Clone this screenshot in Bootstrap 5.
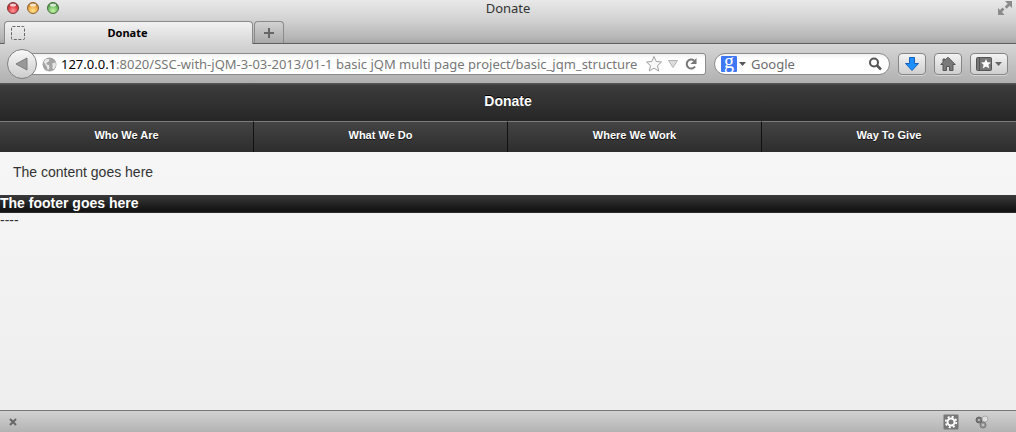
<!DOCTYPE html>
<html lang="en">
<head>
<meta charset="utf-8">
<meta name="viewport" content="width=device-width, initial-scale=1">
<title>Donate</title>
<link href="https://cdn.jsdelivr.net/npm/bootstrap@5.3.0/dist/css/bootstrap.min.css" rel="stylesheet">
<style>
body{font-family:"Liberation Sans",Arial,sans-serif;font-size:14px;line-height:18px;color:#333;background:#eee}
.chrome-ui{font-family:"Noto Sans","Open Sans",sans-serif;font-size:13px;color:#333}
.chrome-ui svg{display:block;flex:none}
.title-strip{background:linear-gradient(#e9e9e9,#d2d2d2 45%,#b4b4b4 88%,#a2a2a2)}
.window-bar{height:16px}
.window-bar h1{font-size:13px;line-height:16px}
.tab-strip{height:28px;padding:5px 4px 0;border-bottom:1px solid #5f5f5f}
.page-tab{width:249px;height:23px;margin-bottom:-1px;border:1px solid #8a8a8a;border-bottom:0;border-radius:4px 4px 0 0;background:linear-gradient(#f2f2f2,#d6d6d6);font-size:11px;font-weight:700;color:#000;padding:0 6px;position:relative}
.tab-add{width:30px;height:22px;border:1px solid #8a8a8a;border-bottom:0;border-radius:4px 4px 0 0;background:linear-gradient(#d2d2d2,#a9a9a9);margin-left:1px}
.tool-strip{height:40px;padding:1px 8px 0 7px;background:linear-gradient(#d6d6d6,#b0b0b0);border-bottom:1px solid #555}
.back-btn{width:30px;height:30px;border:1px solid #808080;border-radius:50%;background:linear-gradient(#f8f8f8,#cdcdcd);z-index:1}
.address{height:22px;margin-left:-8px;padding:0 6px 0 12px;border:1px solid #8b8b8b;border-radius:0 3px 3px 0;background:linear-gradient(#f1f1f1,#fff 5px);color:#000}
.address label{line-height:20px}
.address input,.search input{border:0;padding:0;background:transparent;outline:0;min-width:0;height:20px;color:#777}
.address button,.search button{border:0;padding:0;background:transparent}
.search{width:176px;height:22px;margin-left:8px;padding:0 7px 0 6px;border:1px solid #8b8b8b;border-radius:12px;background:linear-gradient(#f1f1f1,#fff 5px)}
.search input::placeholder{color:#6c6c6c;opacity:1}
.engine-mark{flex:none;width:16px;height:16px;border-radius:1px;background:#3f78f4;color:#fff;font:20px/11px "Liberation Serif",serif;text-align:center}
.tool-btn{width:28px;height:22px;margin-left:8px;padding:0;border:1px solid #858585;border-radius:4px;background:linear-gradient(#f3f3f3,#cfcfcf);box-shadow:0 1px #d5d5d5}
.tool-btn.wide{width:38px}
.app-header{height:37px;padding-bottom:4px;background:linear-gradient(#3c3c3c,#262626);border-top:1px solid #484848;color:#fff;text-shadow:0 -1px #000}
.app-header h2{font-size:14px;line-height:18px}
.app-nav{background:#111}
.app-nav a{height:31px;padding-top:4px;line-height:18px;font-size:11px;color:#fff;text-shadow:0 1px #111;border-top:1px solid #7c7c7c;border-right:1px solid #111;background:linear-gradient(#444,#2d2d2d)}
.app-nav .col:last-child a{border-right:0}
.app-main{background:linear-gradient(#f8f8f8,#eee)}
.app-content{padding:11px 13px 14px;font-size:14px;color:#333}
.app-footer{background:linear-gradient(#3a3a3a,#111 90%,#333);height:18px;line-height:17px;font-size:14px;color:#fff}
.after-footer{line-height:14px}
.addon-bar{height:22px;padding:0 27px 0 8px;border-top:1px solid #777;background:linear-gradient(#d2d2d2,#b3b3b3)}
.addon-bar button{border:0;padding:0;background:transparent}
</style>
</head>
<body class="d-flex flex-column min-vh-100">
<header class="chrome-ui">
  <div class="title-strip">
    <div class="window-bar position-relative d-flex align-items-center justify-content-between">
      <svg width="66" height="16" viewBox="0 0 66 16" role="img" aria-label="Window controls">
        <defs>
          <radialGradient id="r" cx=".5" cy=".75" r=".7"><stop offset="0" stop-color="#ff9a9a"/><stop offset=".6" stop-color="#e24048"/><stop offset="1" stop-color="#a62830"/></radialGradient>
          <radialGradient id="y" cx=".5" cy=".75" r=".7"><stop offset="0" stop-color="#ffe48a"/><stop offset=".6" stop-color="#f0ad4c"/><stop offset="1" stop-color="#b97726"/></radialGradient>
          <radialGradient id="g" cx=".5" cy=".75" r=".7"><stop offset="0" stop-color="#c9f2a6"/><stop offset=".6" stop-color="#7ac36b"/><stop offset="1" stop-color="#447f3b"/></radialGradient>
        </defs>
        <circle cx="13" cy="8" r="5.5" fill="url(#r)" stroke="#7f3b3d"/><circle cx="33" cy="8" r="5.5" fill="url(#y)" stroke="#8d6334"/><circle cx="53" cy="8" r="5.5" fill="url(#g)" stroke="#45703f"/>
        <g fill="#fff" opacity=".75"><ellipse cx="13" cy="5" rx="3" ry="1.5"/><ellipse cx="33" cy="5" rx="3" ry="1.5"/><ellipse cx="53" cy="5" rx="3" ry="1.5"/></g>
      </svg>
      <h1 class="position-absolute start-0 end-0 text-center m-0 fw-normal">Donate</h1>
      <svg width="20" height="16" viewBox="0 0 20 16" fill="#8b8b8b"><path d="M9 1h7v7l-2.300-2.300-3 3-2-2 3-3zM2 8l2 2 2.500-2.500 2 2L6 12l2.500 3H2z"/></svg>
    </div>
    <div class="tab-strip d-flex">
      <div class="page-tab d-flex align-items-center">
        <svg width="14" height="14" viewBox="0 0 14 14"><rect x=".5" y=".5" width="13" height="13" rx="1" fill="none" stroke="#666" stroke-dasharray="3 1.500"/></svg>
        <span class="flex-fill text-center pe-3">Donate</span>
      </div>
      <button class="tab-add d-flex align-items-center justify-content-center" aria-label="New tab"><svg width="12" height="12" viewBox="0 0 12 12"><path d="M6 1v10M1 6h10" stroke="#666" stroke-width="2"/></svg></button>
    </div>
  </div>
  <div class="tool-strip d-flex align-items-center">
    <button class="back-btn position-relative p-0 d-flex align-items-center justify-content-center" aria-label="Back"><svg width="14" height="14" viewBox="0 0 14 14"><path d="M1 7 12 1v12z" fill="#999" stroke="#7d7d7d"/></svg></button>
    <div class="address d-flex align-items-center flex-fill">
      <svg class="me-1" width="15" height="15" viewBox="0 0 14 14"><circle cx="7" cy="7" r="6.500" fill="#a4a4a4"/><path d="M1.500 4.500 4 1.800l3 .2-.5 2L4 5.500l.5 1.500 2 .5L7 10l-1.500 2.500L4.500 9zM9.500 6l3-1 .5 3-2 3.500-1.500-1 .5-2z" fill="#e8e8e8"/></svg>
      <label for="url">127.0.0.1</label>
      <input class="flex-fill" id="url" type="text" value=":8020/SSC-with-jQM-3-03-2013/01-1 basic jQM multi page project/basic_jqm_structure">
      <button class="ms-1" aria-label="Bookmark"><svg width="18" height="18" viewBox="0 0 18 18"><path d="M9 1.500l2.200 5 5.300.5-4 3.600 1.200 5.400L9 13.200 4.300 16l1.200-5.400-4-3.600 5.300-.5z" fill="#f8f8f8" stroke="#a0a0a0"/></svg></button>
      <button class="ms-1" aria-label="History"><svg width="12" height="12" viewBox="0 0 12 12"><path d="M1.500 2.500h9L6 9.500z" fill="#ddd" stroke="#b4b4b4"/></svg></button>
      <button class="ms-1" aria-label="Reload"><svg width="16" height="14" viewBox="0 0 16 14"><path d="M12 9.500A4.500 4.500 0 1 1 11 3.500" fill="none" stroke="#777" stroke-width="2"/><path d="M13.500 1v6h-6z" fill="#777"/></svg></button>
    </div>
    <div class="search d-flex align-items-center">
      <span class="engine-mark">g</span>
      <svg width="10" height="6" viewBox="0 0 10 6"><path d="M2 1h7L5.500 5z" fill="#555"/></svg>
      <input class="flex-fill ms-1" type="text" placeholder="Google" aria-label="Search">
      <button aria-label="Go"><svg width="14" height="14" viewBox="0 0 14 14"><circle cx="6" cy="5.500" r="4" fill="none" stroke="#555" stroke-width="2"/><path d="M9 8.500l4 4" stroke="#555" stroke-width="2.500"/></svg></button>
    </div>
    <button class="tool-btn d-flex align-items-center justify-content-center" aria-label="Downloads"><svg width="16" height="16" viewBox="0 0 16 16"><path d="M5.500 1.500h5v6h4L8 14.500 1.500 7.500h4z" fill="#1e8fff" stroke="#1563bd"/></svg></button>
    <button class="tool-btn d-flex align-items-center justify-content-center" aria-label="Home"><svg width="16" height="16" viewBox="0 0 16 16"><path d="M8 1.200 15.200 8.500H13V14.500H9.500V10.500h-3v4H3V8.500H.8L3 6.200V3h2v1.200z" fill="#7a7a7a" stroke="#555"/></svg></button>
    <button class="tool-btn wide d-flex align-items-center justify-content-center" aria-label="Bookmarks"><svg width="28" height="16" viewBox="0 0 28 16"><rect x="1.500" y="1.500" width="15" height="13" rx="1" fill="#777" stroke="#555"/><path d="M4.500 2v12" stroke="#555"/><path d="M11 3l1.500 3.200 3.500.3-2.600 2.300.9 3.700-3.300-2-3.300 2 .9-3.700L6 6.500l3.500-.3z" fill="#fff"/><path d="M20 6h7l-3.500 4z" fill="#666"/></svg></button>
  </div>
</header>

<main class="app-main flex-fill">
  <div class="app-header d-flex align-items-center justify-content-center"><h2 class="m-0 fw-bold">Donate</h2></div>
  <nav class="app-nav"><div class="row g-0 fw-bold text-center">
    <div class="col"><a class="d-block text-decoration-none" href="#who">Who We Are</a></div>
    <div class="col"><a class="d-block text-decoration-none" href="#what">What We Do</a></div>
    <div class="col"><a class="d-block text-decoration-none" href="#where">Where We Work</a></div>
    <div class="col"><a class="d-block text-decoration-none" href="#give">Way To Give</a></div>
  </div></nav>
  <p class="app-content m-0">The content goes here</p>
  <div class="app-footer fw-bold">The footer goes here</div>
  <div class="after-footer">----</div>
</main>

<footer class="addon-bar chrome-ui d-flex align-items-center">
  <button class="me-auto" aria-label="Close"><svg width="10" height="10" viewBox="0 0 10 10"><path d="M2 2l6 6M8 2l-6 6" stroke="#666" stroke-width="2"/></svg></button>
  <button aria-label="Settings"><svg width="16" height="16" viewBox="0 0 16 16"><rect x=".5" y=".5" width="15" height="15" rx="1" fill="#777"/><circle cx="8" cy="8" r="3.500" fill="none" stroke="#fff" stroke-width="2"/><circle cx="8" cy="8" r="5.300" fill="none" stroke="#fff" stroke-width="1.800" stroke-dasharray="2.080 2.080"/></svg></button>
  <button class="ms-3" aria-label="Add-ons"><svg width="14" height="14" viewBox="0 0 14 14"><circle cx="4" cy="5" r="3" fill="#777" stroke="#666"/><circle cx="10" cy="4" r="3" fill="#ddd" stroke="#aaa"/><circle cx="8" cy="10" r="3" fill="#999" stroke="#777"/><g fill="#ccc"><circle cx="4" cy="5" r="1"/><circle cx="8" cy="10" r="1"/></g></svg></button>
</footer>
<script src="https://cdn.jsdelivr.net/npm/bootstrap@5.3.0/dist/js/bootstrap.bundle.min.js"></script>
</body>
</html>
